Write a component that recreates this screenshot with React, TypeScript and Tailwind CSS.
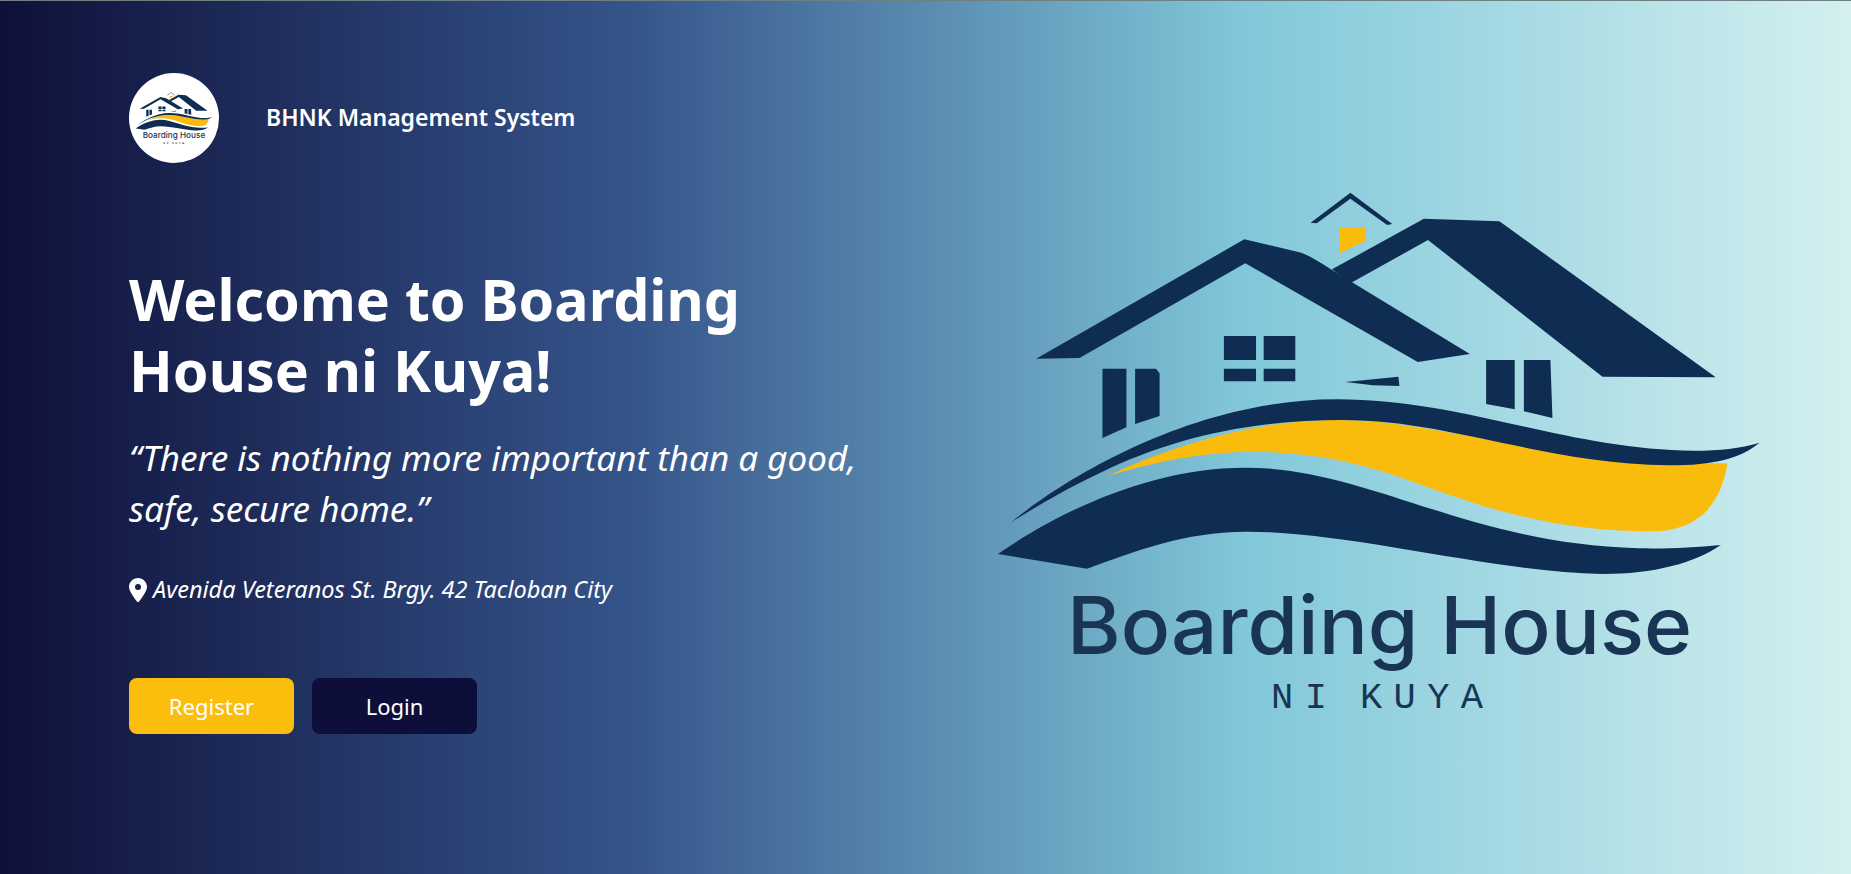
import React from "react";
import { FaLocationDot } from "react-icons/fa6";

const navy = "#0f2d52";
const gold = "#f9bc0c";

function HouseLogo({ className }: { className: string }) {
  return (
    <svg viewBox="0 0 800 570" className={className} aria-label="Boarding House ni Kuya">
      <g transform="scale(0.5102 0.3333)" fill={navy}>
        <path d="M648 158 L726 68 L808 162 L798 165 L726 86 L660 160Z" />
        <path d="M704 172 L756 172 L756 212 L705 250Z" fill={gold} />
        <path d="M110 566 L518 208 L630 248 Q650 260 690 300 L960 552 L858 576 L520 280 L195 564Z" />
        <path d="M690 298 L870 146 L1018 154 L1442 622 L1220 620 L878 210 L726 340Z" />
        <path d="M478 498H541V570H478ZM556 498H618V570H556ZM478 596H541V634H478ZM556 596H618V634H556Z" />
        <path d="M716 636 L820 620 L822 648 L770 646Z" />
        <path d="M240 596 L287 596 L287 772 L240 804Z M304 596 L345 596 L352 610 L352 738 L304 762Z" />
        <path d="M992 570 L1048 570 L1048 718 L992 702Z M1066 570 L1118 570 L1122 744 L1066 724Z" />
      </g>
      <g transform="translate(0 230) scale(0.5102 0.3333)">
        <path
          fill={gold}
          d="M250 228 C400 120 560 60 700 60 C900 60 1100 190 1465 190 C1455 290 1420 392 1320 394 C1100 396 950 300 820 230 C700 165 600 155 520 155 C420 160 330 190 250 228Z"
        />
        <path
          fill={navy}
          d="M60 368 C170 230 420 -2 700 -2 C950 -2 1150 150 1400 152 C1450 152 1490 145 1528 128 C1490 175 1440 196 1350 196 C1100 190 920 60 710 60 C520 60 370 120 240 215 C170 265 110 320 60 368Z"
        />
        <path
          fill={navy}
          d="M35 462 C150 340 330 203 520 203 C760 203 950 430 1290 445 C1350 447 1400 442 1452 435 C1400 490 1320 522 1220 522 C1000 515 720 393 520 395 C400 397 310 450 210 506 Z"
        />
      </g>
      <text
        x="87"
        y="484"
        fill="#1a3454"
        textLength="625"
        lengthAdjust="spacingAndGlyphs"
        className="text-[80px] font-[450] [font-family:Inter,sans-serif]"
      >
        Boarding House
      </text>
      <text
        x="291"
        y="538"
        fill="#1a3454"
        textLength="212"
        className="text-[37px] [font-family:'Liberation_Mono',monospace] [word-spacing:-12px]"
      >
        NI KUYA
      </text>
    </svg>
  );
}

export default function App() {
  return (
    <div className="h-[874px] overflow-hidden border-t border-[#6f8080] bg-[linear-gradient(90deg,#0e1039_0%,#35548a_34%,#82c8da_67.5%,#d4f0f0_100%)] text-white [font-family:'Noto_Sans',sans-serif]">
      <div className="grid h-full grid-cols-2">
        <div className="flex flex-col pl-[129px] pt-[72px]">
          <div className="flex items-center">
            <div className="flex h-[90px] w-[90px] items-center justify-center rounded-full bg-white">
              <HouseLogo className="w-[80px]" />
            </div>
            <span className="ml-[47px] -translate-y-px text-[23px] font-semibold">BHNK Management System</span>
          </div>
          <h1 className="mt-[101px] w-[680px] text-[57.3px] font-bold leading-[71px]">
            Welcome to Boarding House ni Kuya!
          </h1>
          <p className="mt-[26px] w-[760px] text-[35px] italic leading-[51px]">
            “There is nothing more important than a good, safe, secure home.”
          </p>
          <p className="mt-[38px] flex items-center text-[23.5px] italic">
            <FaLocationDot className="mr-[6px] h-[24px] w-[18px]" />
            Avenida Veteranos St. Brgy. 42 Tacloban City
          </p>
          <div className="mt-[71px] flex gap-[18px]">
            <button className="h-[56px] w-[165px] rounded-[8px] bg-[#fbbe0c] text-[22px]">Register</button>
            <button className="h-[56px] w-[165px] rounded-[8px] bg-[#0d0f3a] text-[22px]">Login</button>
          </div>
        </div>
        <div className="pl-[54px] pt-[169px]">
          <HouseLogo className="w-[800px]" />
        </div>
      </div>
    </div>
  );
}
